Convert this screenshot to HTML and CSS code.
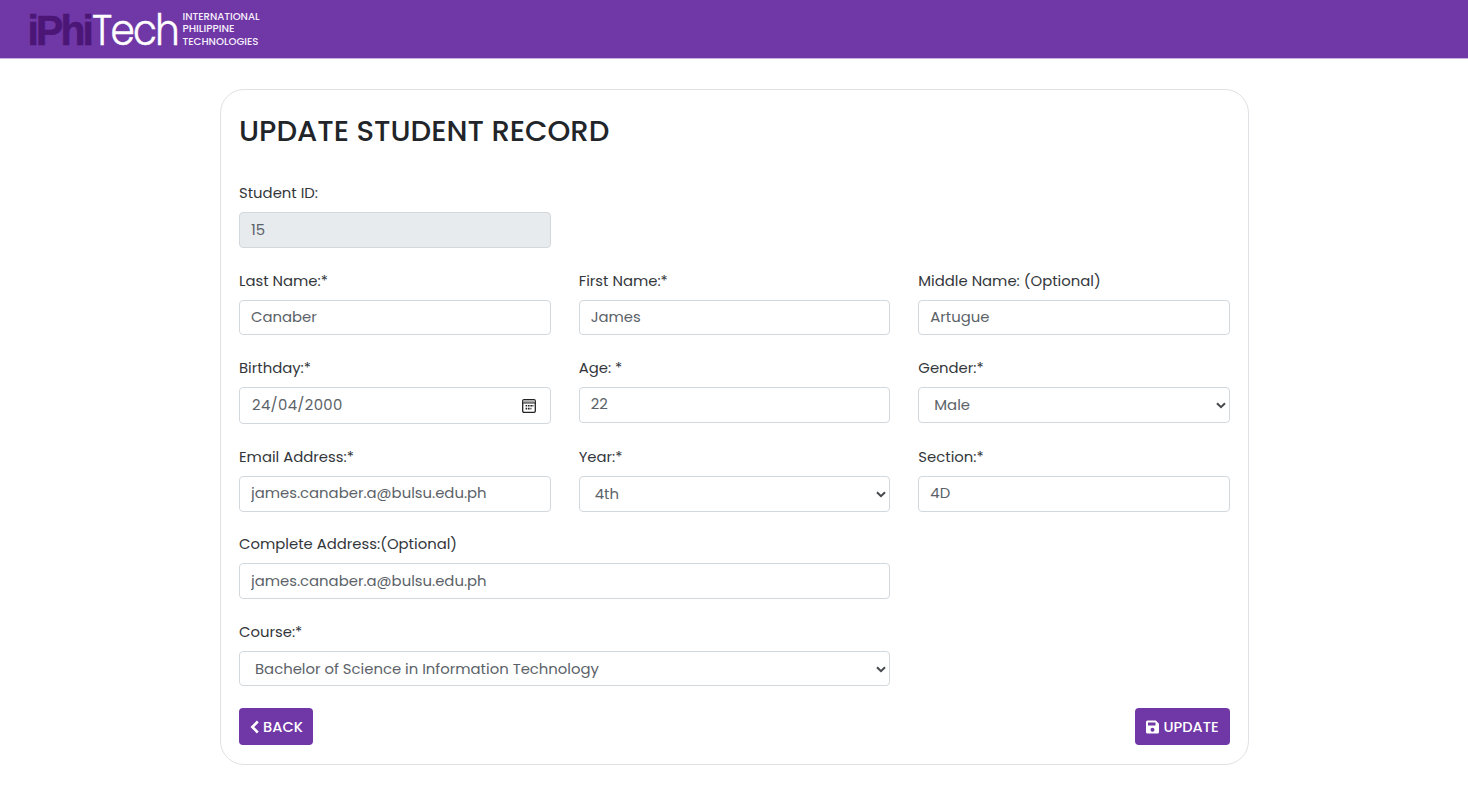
FILE: index.html
```html
<!DOCTYPE html>
<html lang="en">
<head>
<meta charset="utf-8">
<title>Update Student Record</title>
<link rel="stylesheet" href="styles.css">
</head>
<body>
<header class="navbar">
  <svg class="logo" width="270" height="58" viewBox="0 0 270 58" role="img" aria-label="iPhiTech International Philippine Technologies">
    <text class="logo-dark" x="27.500" y="44.500" textLength="63.500" lengthAdjust="spacingAndGlyphs">iPhi</text>
    <text class="logo-light" x="92" y="44.500" textLength="86" lengthAdjust="spacingAndGlyphs">Tech</text>
    <text class="logo-sub" x="182.500" y="19.500" textLength="77" lengthAdjust="spacingAndGlyphs">INTERNATIONAL</text>
    <text class="logo-sub" x="182.500" y="32" textLength="52" lengthAdjust="spacingAndGlyphs">PHILIPPINE</text>
    <text class="logo-sub" x="182.500" y="44.500" textLength="76" lengthAdjust="spacingAndGlyphs">TECHNOLOGIES</text>
  </svg>
</header>
<main class="card">
  <h1 class="title">UPDATE STUDENT RECORD</h1>
  <form class="form">
    <div class="field first"><label class="label">Student ID:</label><input class="control disabled" value="15" readonly></div>

    <div class="field first"><label class="label">Last Name:*</label><input class="control" value="Canaber"></div>
    <div class="field"><label class="label">First Name:*</label><input class="control" value="James"></div>
    <div class="field"><label class="label">Middle Name: (Optional)</label><input class="control" value="Artugue"></div>

    <div class="field first"><label class="label">Birthday:*</label>
      <div class="control date"><span class="date-value">24/04/2000</span>
        <svg class="calendar" width="14" height="14" viewBox="0 0 14 14"><rect x=".7" y=".7" width="12.600" height="12.600" rx="1.300" fill="#fff" stroke="#222" stroke-width="1.300"/><path d="M1.300 1.300h11.400v2.400H1.300z" fill="#aaa"/><path d="M1 4h12" stroke="#222" stroke-width="1"/><path d="M6 6h1.600v1.600H6zM8.400 6H10v1.600H8.400zM3.600 6h1.600v1.600H3.600zM3.600 8.800h1.600v1.600H3.600zM6 8.800h1.600v1.600H6zM10.400 6h1v1.600h-1zM8.400 8.800h1v1.600h-1z" fill="#222"/></svg>
      </div>
    </div>
    <div class="field"><label class="label">Age: *</label><input class="control" value="22"></div>
    <div class="field"><label class="label">Gender:*</label>
      <div class="select"><select class="control"><option>Male</option></select><svg class="chevron" width="10" height="7" viewBox="0 0 10 7"><path d="M1 1.200l4 4 4-4"/></svg></div>
    </div>

    <div class="field first"><label class="label">Email Address:*</label><input class="control" value="james.canaber.a@bulsu.edu.ph"></div>
    <div class="field"><label class="label">Year:*</label>
      <div class="select"><select class="control"><option>4th</option></select><svg class="chevron" width="10" height="7" viewBox="0 0 10 7"><path d="M1 1.200l4 4 4-4"/></svg></div>
    </div>
    <div class="field"><label class="label">Section:*</label><input class="control" value="4D"></div>

    <div class="field first wide"><label class="label">Complete Address:(Optional)</label><input class="control" value="james.canaber.a@bulsu.edu.ph"></div>

    <div class="field first wide"><label class="label">Course:*</label>
      <div class="select"><select class="control"><option>Bachelor of Science in Information Technology</option></select><svg class="chevron" width="10" height="7" viewBox="0 0 10 7"><path d="M1 1.200l4 4 4-4"/></svg></div>
    </div>
  </form>
  <div class="actions">
    <button class="btn back"><svg width="9" height="14" viewBox="0 0 9 14"><path d="M7.800 1.500L2.300 7l5.500 5.500" fill="none" stroke="#fff" stroke-width="2.600"/></svg><span>BACK</span></button>
    <button class="btn update"><svg width="13" height="14" viewBox="0 0 13 14"><path fill="#fff" fill-rule="evenodd" d="M1.500.5h8.300L13 3.700V12a1.500 1.500 0 0 1-1.500 1.500h-10A1.500 1.500 0 0 1 0 12V2A1.500 1.500 0 0 1 1.500.5zM2 2.500v3h7.500v-3zM6.500 7.700a2 2 0 1 0 0 4 2 2 0 0 0 0-4z"/></svg><span>UPDATE</span></button>
  </div>
</main>
</body>
</html>
```

FILE: styles.css
```css
* { box-sizing: border-box; }
body {
  margin: 0;
  background: #fff;
  color: #212529;
  font-family: Poppins, Inter, "Liberation Sans", sans-serif;
}
.navbar {
  height: 59px;
  background: #7037a6;
  border-bottom: 1px solid #c9b3de;
}
.logo { display: block; }
.logo-dark {
  font: 700 43px "Liberation Sans", sans-serif;
  letter-spacing: -3px;
  fill: #4b1676;
  stroke: #4b1676;
  stroke-width: 0.6px;
}
.logo-light {
  font: 300 43px Poppins, Inter, sans-serif;
  letter-spacing: -2px;
  fill: #fff;
  stroke: #fff;
  stroke-width: 0.4px;
}
.logo-sub { font: 500 10.2px Poppins, Inter, sans-serif; fill: #f7f0fc; }
.card {
  width: 1029px;
  height: 676px;
  margin: 30px 0 0 220px;
  padding: 22px 18px 0;
  border: 1px solid #dfe1e4;
  border-radius: 24px;
}
.title {
  margin: 0 0 32.4px;
  font-size: 29.1px;
  font-weight: 500;
  line-height: 38px;
  white-space: nowrap;
}
.form {
  display: grid;
  grid-template-columns: repeat(3, 1fr);
  column-gap: 28px;
  align-items: start;
}
.field { margin-bottom: 21.9px; }
.first { grid-column-start: 1; }
.wide { grid-column: 1 / span 2; }
.label {
  display: block;
  height: 30px;
  font-size: 14.85px;
  font-weight: 400;
  line-height: 22px;
  color: #33373b;
}
.control {
  display: block;
  width: 100%;
  height: 35.5px;
  padding: 0 11px 1px;
  border: 1px solid #d3d8dc;
  border-radius: 4px;
  background: #fff;
  color: #5b6268;
  font-family: inherit;
  font-size: 14.85px;
  outline: 0;
}
.disabled { background: #e7ebee; }
.date {
  display: flex;
  align-items: center;
  justify-content: space-between;
  height: 37px;
  padding: 0 14px 0 12px;
}
.date-value { letter-spacing: 0.35px; line-height: 22px; margin-top: -1px; }
.select { position: relative; }
.select .control { appearance: none; padding: 0 15px; }
.chevron {
  position: absolute;
  right: 4px;
  top: 15px;
  fill: none;
  stroke: #45494d;
  stroke-width: 2;
}
.actions { display: flex; justify-content: space-between; }
.btn {
  display: flex;
  align-items: center;
  justify-content: center;
  height: 37px;
  padding: 0;
  border: 0;
  border-radius: 4px;
  background: #7037a6;
  color: #fff;
  font: 500 14.6px/22px Poppins, Inter, sans-serif;
}
.back { width: 74px; gap: 4px; padding-left: 1px; }
.update { width: 95px; gap: 4px; }
```
